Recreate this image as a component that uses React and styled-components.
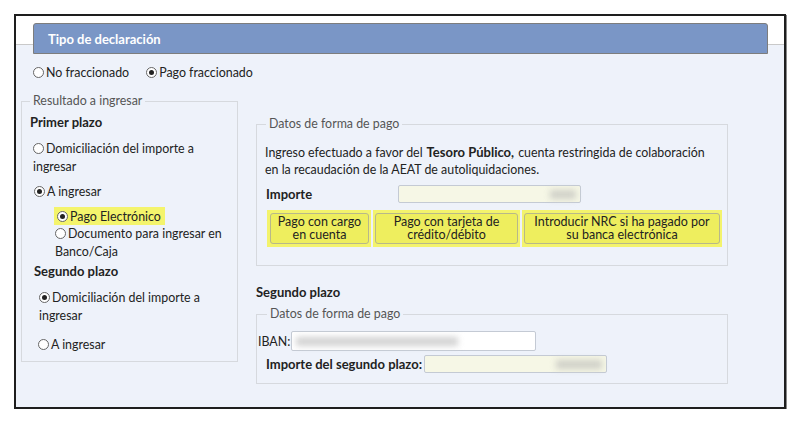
import React from 'react';
import styled, { createGlobalStyle, css } from 'styled-components';

const GlobalStyle = createGlobalStyle`
  body {
    margin: 0;
    background: #fff;
    font-family: Lato, "Liberation Sans", sans-serif;
    font-size: 12.4px;
    color: #222;
  }
`;

const Frame = styled.div`
  margin: 14px 0 0 14px;
  width: 768px;
  height: 391px;
  border: 2px solid #1e1e1e;
  box-shadow: 1px 1px 0 #888;
  background: linear-gradient(#fff 0 28px, #c9c9c9 28px 29px, #eef2fa 29px);
  overflow: hidden;
`;

const Header = styled.div`
  margin: 7px 16px 0 17px;
  height: 29px;
  display: flex;
  align-items: center;
  padding-left: 14px;
  background: #7a96c6;
  border: 1px solid #7d7d7d;
  border-radius: 3px 3px 0 0;
  color: #fff;
  font-weight: 700;
  font-size: 13px;
`;

const RadioRow = styled.div`
  display: flex;
  gap: 17px;
  padding: 10px 0 0 17px;
  height: 18px;
`;

const Choice = styled.div`
  line-height: 17.5px;
  padding-left: ${(p) => p.$indent || 0}px;
  margin-top: ${(p) => p.$top || 0}px;
`;

const Dot = styled.span`
  display: inline-block;
  box-sizing: border-box;
  width: 11px;
  height: 11px;
  margin-right: 2px;
  vertical-align: -1px;
  border: 1px solid #666;
  border-radius: 50%;
  background: #fff;
  position: relative;
  ${(p) =>
    p.$on &&
    css`
      &::after {
        content: '';
        position: absolute;
        left: 2px;
        top: 2px;
        width: 5px;
        height: 5px;
        border-radius: 50%;
        background: #222;
      }
    `}
`;

const Mark = styled.span`
  display: inline-block;
  background: #f4f46c;
  padding: 1px 4px 0 3px;
`;

const Radio = ({ on, children, indent, top, mark }) => (
  <Choice $indent={indent} $top={top}>
    {mark ? (
      <Mark>
        <Dot $on={on} />
        {children}
      </Mark>
    ) : (
      <>
        <Dot $on={on} />
        {children}
      </>
    )}
  </Choice>
);

const Columns = styled.div`
  display: flex;
  gap: 18px;
  padding: 11px 0 0 5px;
`;

const Box = styled.fieldset`
  margin: 0;
  padding: ${(p) => p.$pad || '0 8px'};
  border: 1px solid #d6d9de;
  width: ${(p) => p.$w}px;
  height: ${(p) => p.$h}px;
  box-sizing: border-box;
  min-width: 0;
`;

const Legend = styled.legend`
  margin-left: ${(p) => p.$ml || 0}px;
  padding: 0 3px;
  color: #555;
  line-height: 16px;
`;

const Plazo = styled.div`
  font-weight: 700;
  font-size: 13px;
  line-height: 18px;
  margin: ${(p) => p.$m};
`;

const RightCol = styled.div`
  display: flex;
  flex-direction: column;
  padding-top: 23px;
`;

const Info = styled.p`
  margin: 12px 0 0;
  line-height: 17px;
  b {
    font-size: 13px;
    margin: 0 4px;
  }
`;

const FieldRow = styled.div`
  display: flex;
  align-items: center;
  margin-top: ${(p) => p.$mt || 0}px;
  padding-left: ${(p) => p.$pl || 0}px;
`;

const Label = styled.span`
  font-weight: ${(p) => (p.$bold ? 700 : 400)};
  font-size: ${(p) => (p.$bold ? '13px' : 'inherit')};
  width: ${(p) => (p.$w ? `${p.$w}px` : 'auto')};
  margin-right: ${(p) => p.$gap || 0}px;
`;

const Input = styled.div`
  box-sizing: border-box;
  width: ${(p) => p.$w}px;
  height: ${(p) => p.$h || 18}px;
  border: 1px solid #c4cad4;
  border-radius: 2px;
  background: ${(p) => (p.$amount ? '#f6f7e6' : '#fff')};
  display: flex;
  align-items: center;
  justify-content: ${(p) => (p.$amount ? 'flex-end' : 'flex-start')};
  padding: 0 4px;
`;

const Smudge = styled.span`
  display: block;
  width: ${(p) => p.$w}px;
  height: 9px;
  background: ${(p) => p.$c || '#cfd0c8'};
  filter: blur(3px);
`;

const Buttons = styled.div`
  display: flex;
  margin-top: 7px;
  padding-left: 2px;
`;

const ButtonWrap = styled.div`
  background: #f3f36c;
  padding: 3px 2px 3px ${(p) => (p.$first ? 3 : 2)}px;
  margin-right: ${(p) => p.$mr || 0}px;
`;

const PayButton = styled.button`
  box-sizing: border-box;
  width: ${(p) => p.$w}px;
  height: 31px;
  border: 1px solid #b8b88a;
  border-radius: 3px;
  background: #eeee5e;
  font-family: inherit;
  font-size: 12.5px;
  line-height: 12.5px;
  color: #222;
  padding: 0 4px;
  text-align: center;
`;

const SubTitle = styled.div`
  font-weight: 700;
  font-size: 13px;
  margin: 18px 0 6px;
  line-height: 16px;
`;

export default function App() {
  return (
    <>
      <GlobalStyle />
      <Frame>
        <Header>Tipo de declaración</Header>
        <RadioRow>
          <Radio>No fraccionado</Radio>
          <Radio on>Pago fraccionado</Radio>
        </RadioRow>
        <Columns>
          <Box $w={217} $h={269} $pad="0 8px">
            <Legend>Resultado a ingresar</Legend>
            <Plazo $m="4px 0 9px 0">Primer plazo</Plazo>
            <Radio indent={3}>Domiciliación del importe a ingresar</Radio>
            <Radio on indent={4} top={8}>A ingresar</Radio>
            <Radio on mark indent={24} top={6}>Pago Electrónico</Radio>
            <Radio indent={25}>Documento para ingresar en Banco/Caja</Radio>
            <Plazo $m="2px 0 9px 4px">Segundo plazo</Plazo>
            <Radio on indent={9}>Domiciliación del importe a ingresar</Radio>
            <Radio indent={8} top={12}>A ingresar</Radio>
          </Box>
          <RightCol>
            <Box $w={472} $h={150} $pad="0 8px">
              <Legend $ml={1}>Datos de forma de pago</Legend>
              <Info>
                Ingreso efectuado a favor del<b>Tesoro Público,</b>cuenta
                restringida de colaboración en la recaudación de la AEAT de
                autoliquidaciones.
              </Info>
              <FieldRow $mt={7} $pl={1}>
                <Label $bold $w={132}>Importe</Label>
                <Input $amount $w={183}>
                  <Smudge $w={26} />
                </Input>
              </FieldRow>
              <Buttons>
                <ButtonWrap $first $mr={2}>
                  <PayButton $w={99}>Pago con cargo en cuenta</PayButton>
                </ButtonWrap>
                <ButtonWrap $mr={2}>
                  <PayButton $w={143}>Pago con tarjeta de crédito/débito</PayButton>
                </ButtonWrap>
                <ButtonWrap>
                  <PayButton $w={196}>Introducir NRC si ha pagado por su banca electrónica</PayButton>
                </ButtonWrap>
              </Buttons>
            </Box>
            <SubTitle>Segundo plazo</SubTitle>
            <Box $w={472} $h={78} $pad="0 8px 0 1px">
              <Legend $ml={9}>Datos de forma de pago</Legend>
              <FieldRow $mt={9}>
                <Label $gap={1}>IBAN:</Label>
                <Input $w={245} $h={20}>
                  <Smudge $w={162} $c="#d2d2d2" />
                </Input>
              </FieldRow>
              <FieldRow $mt={4} $pl={8}>
                <Label $bold $gap={2}>Importe del segundo plazo:</Label>
                <Input $amount $w={183}>
                  <Smudge $w={46} />
                </Input>
              </FieldRow>
            </Box>
          </RightCol>
        </Columns>
      </Frame>
    </>
  );
}
